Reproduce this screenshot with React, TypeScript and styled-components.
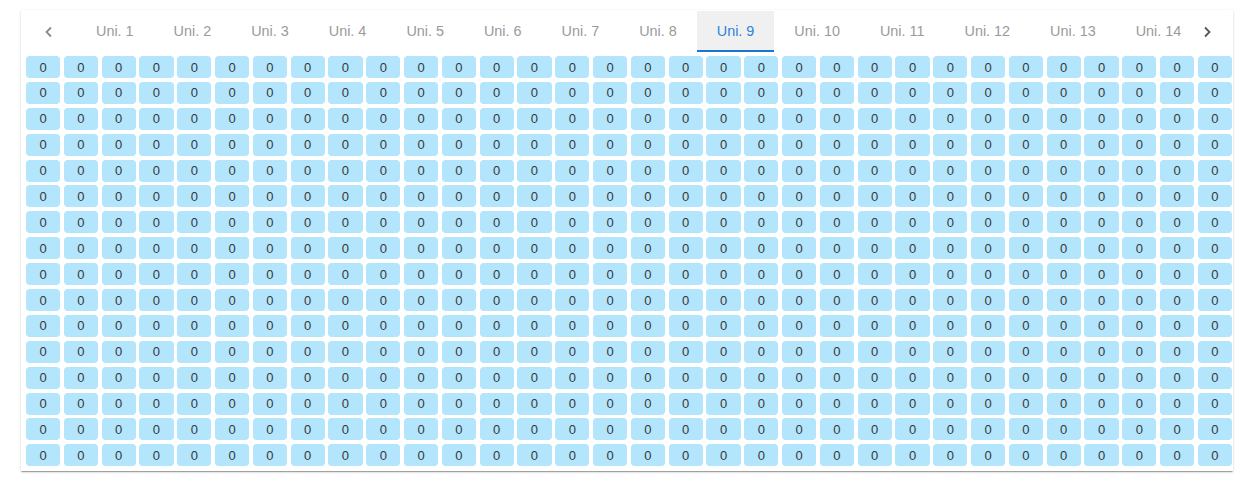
import React, { useState } from "react";
import styled, { createGlobalStyle } from "styled-components";

const GlobalStyle = createGlobalStyle`
  body {
    margin: 0;
    background: #ffffff;
    font-family: "Liberation Sans", Arial, sans-serif;
  }
`;

const Page = styled.div`
  padding: 10px 12px 14px 21px;
`;

const Card = styled.div`
  background: #ffffff;
  box-shadow: 0px 2px 1px -1px rgba(0, 0, 0, 0.2), 0px 1px 1px 0px rgba(0, 0, 0, 0.14),
    0px 1px 3px 0px rgba(0, 0, 0, 0.12);
  overflow: hidden;
`;

const TabBar = styled.div`
  display: flex;
  align-items: stretch;
  height: 41px;
  margin-top: 1px;
`;

const ScrollButton = styled.button<{ $width: number; $muted?: boolean }>`
  flex: 0 0 ${(p) => p.$width}px;
  border: none;
  background: #ffffff;
  display: flex;
  align-items: center;
  justify-content: center;
  padding: 0;
  color: ${(p) => (p.$muted ? "#8a8a8a" : "#555555")};
  cursor: pointer;
`;

const TabScroller = styled.div`
  flex: 1;
  display: flex;
  overflow: hidden;
  white-space: nowrap;
`;

const Tab = styled.button<{ $active?: boolean }>`
  flex: 0 0 auto;
  border: none;
  border-bottom: 2px solid ${(p) => (p.$active ? "#1976d2" : "transparent")};
  background: ${(p) => (p.$active ? "#f0f0f0" : "transparent")};
  color: ${(p) => (p.$active ? "#2a84d8" : "#9a9a9a")};
  font-family: "Liberation Sans", Arial, sans-serif;
  font-size: 14.4px;
  padding: 1px 20px 0;
  cursor: pointer;
`;

const Grid = styled.div`
  display: grid;
  grid-template-columns: repeat(32, 1fr);
  column-gap: 3.7px;
  row-gap: 3.9px;
  padding: 4px 1px 5px 5px;
`;

const Cell = styled.div`
  height: 22px;
  background: #b3e5fc;
  border-radius: 4px;
  display: flex;
  align-items: center;
  justify-content: center;
  font-family: "Liberation Sans", Arial, sans-serif;
  font-size: 13px;
  color: #383838;
`;

const Chevron = ({ dir }: { dir: "left" | "right" }) => (
  <svg width="14" height="14" viewBox="0 0 14 14" fill="none" stroke="currentColor" strokeWidth="1.8">
    {dir === "left" ? <polyline points="9,2.5 4.5,7 9,11.5" /> : <polyline points="5,2.5 9.5,7 5,11.5" />}
  </svg>
);

const tabs = Array.from({ length: 16 }, (_, i) => `Uni. ${i + 1}`);

export default function App() {
  const [active, setActive] = useState(8);
  const values = Array.from({ length: 16 * 32 }, () => 0);

  return (
    <>
      <GlobalStyle />
      <Page>
        <Card>
          <TabBar>
            <ScrollButton $width={55} $muted>
              <Chevron dir="left" />
            </ScrollButton>
            <TabScroller>
              {tabs.map((t, i) => (
                <Tab key={t} $active={i === active} onClick={() => setActive(i)}>
                  {t}
                </Tab>
              ))}
            </TabScroller>
            <ScrollButton $width={52}>
              <Chevron dir="right" />
            </ScrollButton>
          </TabBar>
          <Grid>
            {values.map((v, i) => (
              <Cell key={i}>{v}</Cell>
            ))}
          </Grid>
        </Card>
      </Page>
    </>
  );
}
